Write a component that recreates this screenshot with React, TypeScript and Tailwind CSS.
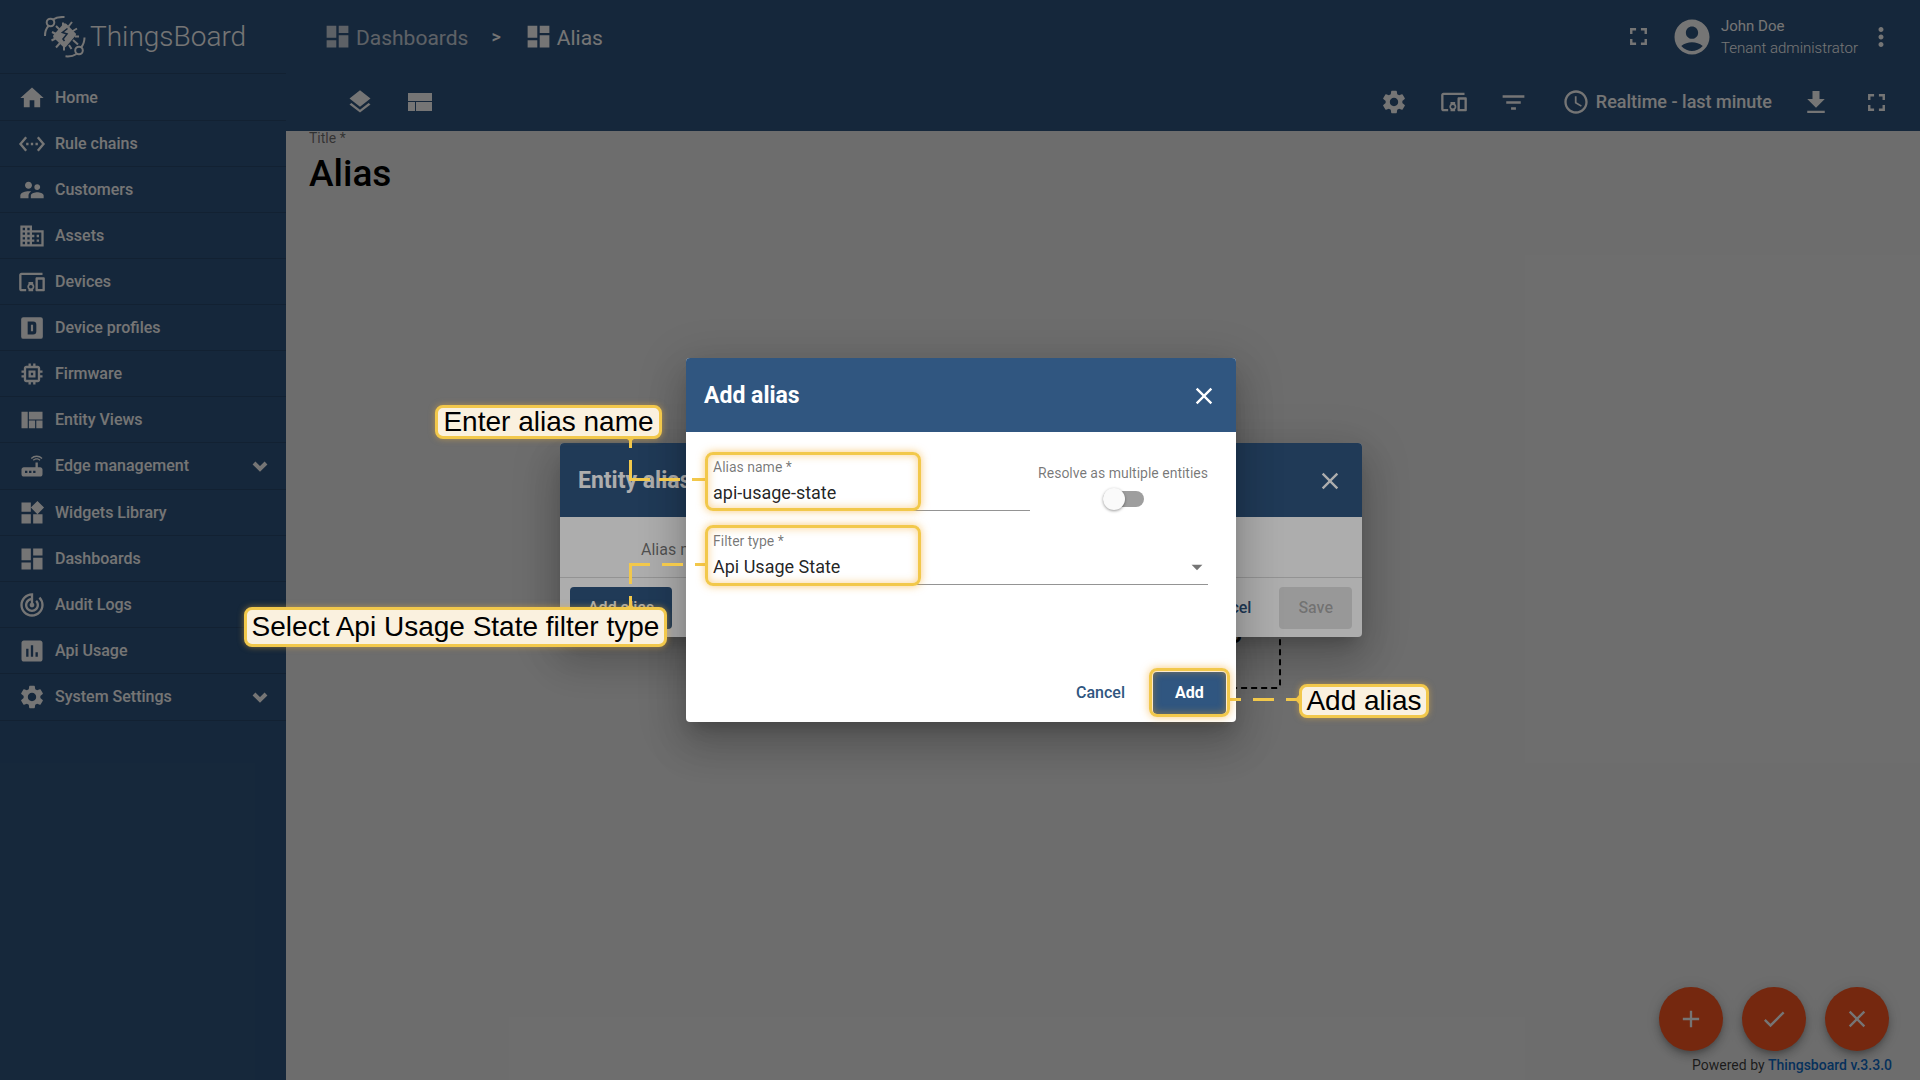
import { useState, type ReactNode } from "react";
import {
  MdAccountCircle,
  MdAdd,
  MdArrowDropDown,
  MdCheck,
  MdClose,
  MdDashboard,
  MdDevicesOther,
  MdDomain,
  MdFilterList,
  MdFullscreen,
  MdHome,
  MdInsertChart,
  MdLayers,
  MdMemory,
  MdMoreVert,
  MdQueryBuilder,
  MdRouter,
  MdSettings,
  MdSettingsEthernet,
  MdSupervisorAccount,
  MdTrackChanges,
  MdViewQuilt,
  MdWidgets,
} from "react-icons/md";

type NavItem = { label: string; icon: ReactNode; expandable?: boolean };

function DeviceProfileIcon() {
  return (
    <svg viewBox="0 0 24 24" width="26" height="26" fill="currentColor" fillRule="evenodd">
      <path d="M4 2h16a2 2 0 0 1 2 2v16a2 2 0 0 1-2 2H4a2 2 0 0 1-2-2V4a2 2 0 0 1 2-2zM8 6v12h5a3 3 0 0 0 3-3V9a3 3 0 0 0-3-3zm3 3h2v6h-2z" />
    </svg>
  );
}

function ChevronIcon() {
  return (
    <svg viewBox="0 0 16 12" width="16" height="12" fill="none" stroke="currentColor" strokeWidth="4">
      <path d="M2 3l6 6 6-6" />
    </svg>
  );
}

function LayoutIcon() {
  return (
    <svg viewBox="0 0 24 18" width="24" height="18" fill="currentColor">
      <path d="M0 0h24v8H0zM0 9h7v9H0zM8 9h16v9H8z" />
    </svg>
  );
}

function DownloadIcon() {
  return (
    <svg viewBox="0 0 24 24" width="28" height="28" fill="currentColor">
      <path d="M19.500 9.500H15v-7H9v7H4.500L12 17zM4.500 19.500v2h15v-2z" />
    </svg>
  );
}

function LogoMark() {
  return (
    <svg viewBox="0 0 42 42" width="42" height="42" fill="none" stroke="currentColor" strokeWidth="2">
      <circle cx="6.500" cy="6.500" r="3.800" />
      <path d="M9 3.500C12 1.500 16 .8 20.500 1M4.500 10C2 12.500 1 16.500 1 20" />
      <circle cx="35" cy="34.500" r="3.800" />
      <path d="M32.500 38C29.500 40 25.500 40.700 21.500 40.300M37 31.500C39.500 28.500 40.500 25 40.500 21.500" />
      <path d="M12 10l4 4M19 6.500v4M28 6l-3.500 4.500M33 12.500l-5 3M35 20.500h-4M34 28.500l-5-4.500M27.500 33l-2.500-4M20 34.500v-4M12 31.500l4-4.500M7.500 24.500l4-2M8 16l4 2" />
      <path
        d="M19.500 7.700q1.500-1 3 .3l9 9.200q1 1.200 0 2.500l-9.500 11q-1.500 1.200-3 0l-9.500-9.200q-1-1.200 0-2.500z"
        fill="currentColor"
        stroke="none"
      />
      <path d="M23.500 12.500l-5 4 4.500 1.500-4 5 1.500 2" stroke="#305680" strokeWidth="1.600" />
    </svg>
  );
}

const NAV: NavItem[] = [
  { label: "Home", icon: <MdHome size={28} /> },
  { label: "Rule chains", icon: <MdSettingsEthernet size={28} /> },
  { label: "Customers", icon: <MdSupervisorAccount size={28} /> },
  { label: "Assets", icon: <MdDomain size={28} /> },
  { label: "Devices", icon: <MdDevicesOther size={28} /> },
  { label: "Device profiles", icon: <DeviceProfileIcon /> },
  { label: "Firmware", icon: <MdMemory size={28} /> },
  { label: "Entity Views", icon: <MdViewQuilt size={28} /> },
  { label: "Edge management", icon: <MdRouter size={28} />, expandable: true },
  { label: "Widgets Library", icon: <MdWidgets size={28} /> },
  { label: "Dashboards", icon: <MdDashboard size={28} /> },
  { label: "Audit Logs", icon: <MdTrackChanges size={28} /> },
  { label: "Api Usage", icon: <MdInsertChart size={28} /> },
  { label: "System Settings", icon: <MdSettings size={28} />, expandable: true },
];

function Sidebar() {
  return (
    <aside className="flex w-[286px] shrink-0 flex-col bg-[#305680] text-white">
      <div className="flex h-[74px] items-center gap-1 border-b border-black/15 pl-11">
        <LogoMark />
        <span className="text-[28px] leading-none font-light">ThingsBoard</span>
      </div>
      <nav className="pt-px">
        {NAV.map((item) => (
          <a
            key={item.label}
            href="#"
            className={`flex items-center border-b border-black/15 px-[18px] text-base font-medium ${
              item.expandable ? "h-[47px]" : "h-[46px]"
            }`}
          >
            <span className="flex w-7 justify-center">{item.icon}</span>
            <span className="ml-[9px] flex-1">{item.label}</span>
            {item.expandable && <ChevronIcon />}
          </a>
        ))}
      </nav>
    </aside>
  );
}

function IconButton({ label, children }: { label: string; children: ReactNode }) {
  return (
    <button type="button" aria-label={label} className="flex h-10 w-[60px] items-center justify-center">
      {children}
    </button>
  );
}

function TopBar() {
  return (
    <header className="bg-[#305680] text-white">
      <div className="flex h-[73px] items-center pr-6 pl-[37px]">
        <a href="#" className="flex items-center gap-1 text-[21px] opacity-75">
          <MdDashboard size={29} />
          <span className="pt-1">Dashboards</span>
        </a>
        <span className="px-[23px] text-lg font-medium">&gt;</span>
        <a href="#" className="flex items-center gap-1 text-[21px]">
          <MdDashboard size={29} />
          <span className="pt-1">Alias</span>
        </a>
        <div className="ml-auto flex items-center">
          <button type="button" aria-label="Fullscreen">
            <MdFullscreen size={29} />
          </button>
          <MdAccountCircle size={42} className="ml-[18px]" />
          <div className="ml-2 text-[15px] leading-[22px]">
            <div>John Doe</div>
            <div className="font-light">Tenant administrator</div>
          </div>
          <button type="button" aria-label="User menu" className="ml-2">
            <MdMoreVert size={30} />
          </button>
        </div>
      </div>
      <div className="flex h-[58px] items-center pr-3.5 pl-11">
        <IconButton label="Manage states">
          <MdLayers size={28} />
        </IconButton>
        <IconButton label="Manage layouts">
          <LayoutIcon />
        </IconButton>
        <div className="ml-auto flex items-center">
          <IconButton label="Dashboard settings">
            <MdSettings size={28} />
          </IconButton>
          <IconButton label="Entity aliases">
            <MdDevicesOther size={28} />
          </IconButton>
          <IconButton label="Filters">
            <MdFilterList size={29} />
          </IconButton>
          <button type="button" className="ml-[18px] flex items-center gap-1.5 text-lg font-medium">
            <MdQueryBuilder size={28} />
            Realtime - last minute
          </button>
          <span className="ml-3.5 flex">
            <IconButton label="Export">
              <DownloadIcon />
            </IconButton>
            <IconButton label="Expand">
              <MdFullscreen size={29} />
            </IconButton>
          </span>
        </div>
      </div>
    </header>
  );
}

function Fab({ label, children }: { label: string; children: ReactNode }) {
  return (
    <button
      type="button"
      aria-label={label}
      className="flex size-16 items-center justify-center rounded-full bg-[#ff5722] text-white shadow-[0_3px_5px_-1px_rgba(0,0,0,0.2),0_6px_10px_0_rgba(0,0,0,0.14),0_1px_18px_0_rgba(0,0,0,0.12)]"
    >
      {children}
    </button>
  );
}

function Dashboard() {
  return (
    <main className="relative flex flex-1 flex-col bg-[#eee]">
      <div className="absolute top-0 left-[23px] text-black">
        <div className="text-sm leading-[14px] text-black/55">Title *</div>
        <h1 className="mt-1.5 text-[37px] leading-[46px] font-medium">Alias</h1>
      </div>
      <div className="flex flex-1 items-center justify-center pt-11">
        <button
          type="button"
          className="flex h-[122px] w-[356px] items-center justify-end rounded border-2 border-dashed border-black pr-3 text-[28px] font-medium"
        >
          <MdAdd size={96} />
          Add new widget
        </button>
      </div>
      <footer className="absolute right-7 bottom-[5px] flex flex-col items-end">
        <div className="mr-[3px] flex gap-[19px]">
          <Fab label="Add widget">
            <MdAdd size={28} />
          </Fab>
          <Fab label="Apply changes">
            <MdCheck size={28} />
          </Fab>
          <Fab label="Discard changes">
            <MdClose size={28} />
          </Fab>
        </div>
        <p className="mt-1 text-sm leading-5 text-black/75">
          Powered by{" "}
          <a href="#" className="font-medium text-[#106cc8]">
            Thingsboard v.3.3.0
          </a>
        </p>
      </footer>
    </main>
  );
}

const OVERLAY = "absolute inset-0 flex items-center justify-center bg-black/32 pl-0.5";
const DIALOG =
  "relative flex flex-col rounded bg-white shadow-[0_11px_15px_-7px_rgba(0,0,0,0.2),0_24px_38px_3px_rgba(0,0,0,0.14),0_9px_46px_8px_rgba(0,0,0,0.12)]";

function DialogHeader({ title }: { title: string }) {
  return (
    <div className="flex items-center justify-between rounded-t bg-[#305680] px-[18px] pt-6 pb-[22px] text-white">
      <h2 className="text-[23px] leading-7 font-bold">{title}</h2>
      <button type="button" aria-label="Close">
        <MdClose size={28} />
      </button>
    </div>
  );
}

function EntityAliasesDialog() {
  return (
    <div className={OVERLAY}>
      <section className={`${DIALOG} w-[802px]`}>
        <DialogHeader title="Entity aliases" />
        <div className="flex h-[60px] items-center pt-1.5 pl-[81px] text-base text-black/55">Alias name</div>
        <div className="flex h-[60px] items-center border-t border-black/15 px-[10px] text-base font-medium">
          <button type="button" className="h-[42px] rounded bg-[#305680] px-[18px] text-white">
            Add alias
          </button>
          <button type="button" className="ml-auto px-5 text-[#305680]">
            Cancel
          </button>
          <button type="button" disabled className="ml-2 h-[42px] rounded bg-black/12 px-[19px] text-black/26">
            Save
          </button>
        </div>
      </section>
    </div>
  );
}

const CALLOUT =
  "absolute flex items-center justify-center rounded-lg border-3 border-[#f2c84b] bg-[#faf1df] font-['Liberation_Sans',sans-serif] text-[28px] whitespace-nowrap text-black shadow-[0_0_6px_rgba(242,180,60,0.5)]";
const HIGHLIGHT =
  "absolute rounded-lg border-3 border-[#f2c84b] shadow-[0_0_8px_rgba(245,166,35,0.6),inset_0_0_8px_rgba(245,166,35,0.5)]";

/* Tutorial callouts, anchored to the dialog that they explain. */
function Callouts() {
  return (
    <div className="pointer-events-none absolute inset-0">
      <svg className="absolute top-0 left-0 overflow-visible" width="1" height="1" fill="none" stroke="#f2c84b" strokeWidth="3">
        <path d="M-55.500 81v9M-55.500 102v21M-57 121.500h21M-27 121.500h21M6 121.500h13" />
        <path d="M-55.500 249v-11M-55.500 226v-21M-57 206.500h21M-24 206.500h21M9 206.500h10" />
        <path d="M544 341.500h11M567 341.500h21M600 341.500h13" />
        <path d="M-60 80h9l-4.500 4z M-60 250h9l-4.500-4z M613 337v9l-4-4.500z" fill="#f2c84b" stroke="none" />
      </svg>
      <div className={`${HIGHLIGHT} top-[94px] left-[19px] h-[59px] w-[216px]`} />
      <div className={`${HIGHLIGHT} top-[167px] left-[19px] h-[61px] w-[216px]`} />
      <div className={`${HIGHLIGHT} top-[310px] left-[463px] h-[49px] w-[81px]`} />
      <div className={`${CALLOUT} top-[47px] left-[-251px] h-[34px] w-[227px]`}>Enter alias name</div>
      <div className={`${CALLOUT} top-[249px] left-[-442px] h-10 w-[423px]`}>Select Api Usage State filter type</div>
      <div className={`${CALLOUT} top-[326px] left-[613px] h-[34px] w-[130px]`}>Add alias</div>
    </div>
  );
}

function AddAliasDialog() {
  const [name, setName] = useState("api-usage-state");
  const [multiple, setMultiple] = useState(false);

  return (
    <div className={OVERLAY}>
      <section className={`${DIALOG} w-[550px]`}>
        <DialogHeader title="Add alias" />
        <form className="flex flex-col pt-[27px] pr-7 pl-[27px]">
          <div className="flex gap-2">
            <div className="flex min-w-0 flex-1 flex-col border-b border-black/42">
              <label htmlFor="alias-name" className="text-sm leading-4 text-black/54">
                Alias name *
              </label>
              <input
                id="alias-name"
                value={name}
                onChange={(e) => setName(e.target.value)}
                className="h-[35px] text-lg text-black/87 outline-none"
              />
            </div>
            <label className="mt-1 flex flex-col items-center text-sm whitespace-nowrap text-black/54">
              Resolve as multiple entities
              <input
                type="checkbox"
                role="switch"
                checked={multiple}
                onChange={(e) => setMultiple(e.target.checked)}
                className="peer sr-only"
              />
              <span className="mt-2 flex h-4 w-[41px] items-center rounded-full bg-[#9e9e9e] peer-checked:justify-end">
                <span className="size-[22px] rounded-full bg-[#fafafa] shadow-[0_1px_3px_rgba(0,0,0,0.4)]" />
              </span>
            </label>
          </div>
          <div className="mt-[22px] flex flex-col border-b border-black/42">
            <label htmlFor="filter-type" className="text-sm leading-4 text-black/54">
              Filter type *
            </label>
            <div className="relative flex items-center">
              <select id="filter-type" className="h-[35px] w-full appearance-none text-lg text-black/87 outline-none">
                <option>Api Usage State</option>
              </select>
              <MdArrowDropDown size={26} className="pointer-events-none absolute -right-0.5 text-black/54" />
            </div>
          </div>
        </form>
        <div className="mt-[87px] flex items-center justify-end pr-2.5 pb-2 text-base font-medium">
          <button type="button" className="px-5 text-[#305680]">
            Cancel
          </button>
          <button type="button" className="ml-2 h-[42px] w-[73px] rounded bg-[#305680] font-bold text-white">
            Add
          </button>
        </div>
        <Callouts />
      </section>
    </div>
  );
}

export default function App() {
  return (
    <div className="relative flex min-h-screen overflow-hidden font-[Roboto,sans-serif]">
      <Sidebar />
      <div className="flex min-w-0 flex-1 flex-col">
        <TopBar />
        <Dashboard />
      </div>
      <EntityAliasesDialog />
      <AddAliasDialog />
    </div>
  );
}
